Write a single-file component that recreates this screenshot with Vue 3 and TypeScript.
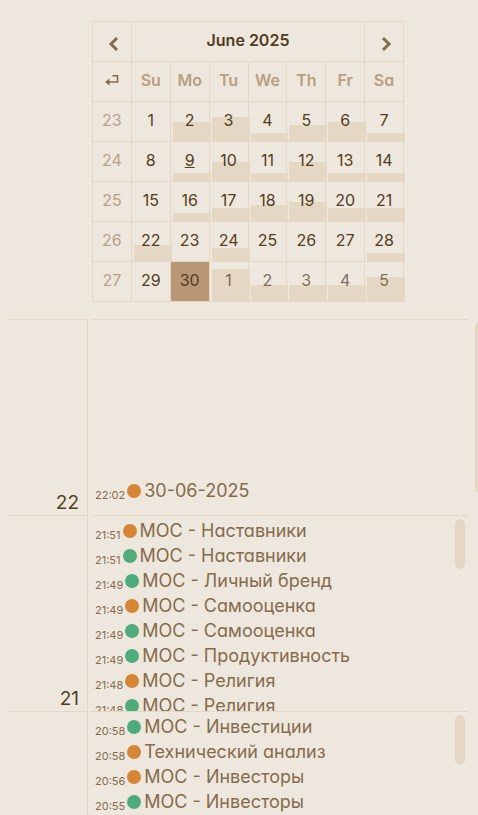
<script setup lang="ts">
import { ref } from 'vue'

interface Day {
  n: number
  fill: number
  next?: boolean
}
interface Week {
  no: number
  days: Day[]
}
interface Entry {
  time: string
  title: string
  color: 'orange' | 'green'
}
interface Hour {
  hour: number
  entries: Entry[]
  end?: boolean
}

const weekdays = ['Su', 'Mo', 'Tu', 'We', 'Th', 'Fr', 'Sa']
const today = 9
const selected = ref('27-30')

function makeWeek(no: number, first: number, fills: number[]): Week {
  return {
    no,
    days: fills.map((fill, i) => {
      const n = first + i
      return n > 30 ? { n: n - 30, fill, next: true } : { n, fill }
    }),
  }
}

const weeks: Week[] = [
  makeWeek(23, 1, [0, 20, 25, 9, 17, 20, 9]),
  makeWeek(24, 8, [0, 9, 20, 9, 20, 9, 9]),
  makeWeek(25, 15, [0, 9, 14, 17, 20, 14, 14]),
  makeWeek(26, 22, [17, 0, 14, 0, 0, 0, 9]),
  makeWeek(27, 29, [0, 0, 33, 17, 17, 17, 25]),
]

const hours: Hour[] = [
  { hour: 22, end: true, entries: [{ time: '22:02', title: '30-06-2025', color: 'orange' }] },
  {
    hour: 21,
    entries: [
      { time: '21:51', title: 'МОС - Наставники', color: 'orange' },
      { time: '21:51', title: 'МОС - Наставники', color: 'green' },
      { time: '21:49', title: 'МОС - Личный бренд', color: 'green' },
      { time: '21:49', title: 'МОС - Самооценка', color: 'orange' },
      { time: '21:49', title: 'МОС - Самооценка', color: 'green' },
      { time: '21:49', title: 'МОС - Продуктивность', color: 'green' },
      { time: '21:48', title: 'МОС - Религия', color: 'orange' },
      { time: '21:48', title: 'МОС - Религия', color: 'green' },
    ],
  },
  {
    hour: 20,
    entries: [
      { time: '20:58', title: 'МОС - Инвестиции', color: 'green' },
      { time: '20:58', title: 'Технический анализ', color: 'orange' },
      { time: '20:56', title: 'МОС - Инвесторы', color: 'orange' },
      { time: '20:55', title: 'МОС - Инвесторы', color: 'green' },
    ],
  },
]
</script>

<template>
  <main class="page">
    <div class="calendar-wrap">
      <table class="calendar">
        <thead>
          <tr>
            <th>
              <button class="nav" type="button" aria-label="Previous month">
                <svg width="12" height="16" viewBox="0 0 12 16"><path d="M9 2l-6 6 6 6" /></svg>
              </button>
            </th>
            <th colspan="6" class="month">June 2025</th>
            <th>
              <button class="nav" type="button" aria-label="Next month">
                <svg width="12" height="16" viewBox="0 0 12 16"><path d="M3 2l6 6-6 6" /></svg>
              </button>
            </th>
          </tr>
          <tr>
            <th>
              <button class="back" type="button" aria-label="Go to today">
                <svg width="14" height="12" viewBox="0 0 14 12">
                  <path class="line" d="M7.500 1.800H12.500V8H4" />
                  <path class="head" d="M0 8 4.500 4.500v7z" />
                </svg>
              </button>
            </th>
            <th v-for="d in weekdays" :key="d" class="weekday">{{ d }}</th>
          </tr>
        </thead>
        <tbody>
          <tr v-for="w in weeks" :key="w.no">
            <td class="week-no">{{ w.no }}</td>
            <td v-for="d in w.days" :key="d.n">
              <button
                type="button"
                class="day"
                :class="{
                  next: d.next,
                  selected: selected === `${w.no}-${d.n}`,
                  today: d.n === today && !d.next,
                }"
                @click="selected = `${w.no}-${d.n}`"
              >
                <span v-if="d.fill" class="fill" :style="{ height: `${d.fill}px` }"></span>
                <span class="num">{{ d.n }}</span>
              </button>
            </td>
          </tr>
        </tbody>
      </table>
    </div>

    <section class="agenda">
      <div v-for="h in hours" :key="h.hour" class="row">
        <div class="hour">{{ h.hour }}</div>
        <div class="slot">
          <ul class="entries" :class="{ end: h.end }">
            <li v-for="(e, i) in h.entries" :key="i">
              <a href="#" class="entry">
                <span class="time">{{ e.time }}</span>
                <span class="dot" :class="e.color"></span>
                <span>{{ e.title }}</span>
              </a>
            </li>
          </ul>
          <span v-if="!h.end" class="thumb"></span>
        </div>
      </div>
    </section>
    <span class="page-thumb"></span>
  </main>
</template>

<style>
body {
  background: #eee7de;
}
</style>

<style scoped>
.page {
  position: relative;
  box-sizing: border-box;
  display: flex;
  flex-direction: column;
  gap: 17px;
  height: 100vh;
  padding: 21px 10px 0 8px;
  overflow: hidden;
  color: #533d20;
  background: #eee7de;
  font-family: Inter, 'Noto Sans', sans-serif;
  font-feature-settings: 'cv11';
  font-size: 16px;
}
.calendar-wrap {
  display: flex;
  justify-content: center;
  padding-left: 20px;
}
.calendar {
  width: 312px;
  table-layout: fixed;
  border-collapse: collapse;
  text-align: center;
}
.calendar th,
.calendar td {
  box-sizing: border-box;
  height: 40px;
  padding: 0;
  border: 1px solid #e4d8c5;
  line-height: 20px;
}
.calendar .month,
.calendar .weekday,
.calendar .week-no {
  padding-bottom: 4px;
}
.calendar .month {
  font-weight: 600;
}
.calendar .weekday {
  color: #b89f80;
  font-weight: 600;
}
.calendar .week-no {
  color: #b8a184;
}
button {
  display: flex;
  align-items: center;
  justify-content: center;
  width: 100%;
  height: 39px;
  padding: 0;
  border: 0;
  background: none;
  color: inherit;
  font: inherit;
  font-feature-settings: inherit;
  cursor: pointer;
}
.nav {
  padding: 5px 0 0 4px;
}
.nav path {
  fill: none;
  stroke: #856c4b;
  stroke-width: 3;
}
.back {
  padding-bottom: 4px;
}
.back .line {
  fill: none;
  stroke: #856c4b;
  stroke-width: 1.6;
}
.back .head {
  fill: #856c4b;
}
.day {
  position: relative;
  padding-bottom: 4px;
}
.fill {
  position: absolute;
  right: -2px;
  bottom: -1px;
  left: 2px;
  background: #e4d8c5;
}
.num {
  position: relative;
}
.next .num {
  opacity: 0.7;
}
.today .num {
  text-decoration: underline;
}
.selected {
  background: #b89676;
}
.agenda {
  flex: 1;
  min-height: 0;
  overflow-y: auto;
  scrollbar-width: none;
}
.row {
  display: grid;
  grid-template-columns: 80px 1fr;
  gap: 3px;
  height: 196px;
}
.hour {
  display: flex;
  align-items: flex-end;
  justify-content: flex-end;
  padding-right: 8px;
  border-top: 1px solid #e4d8c5;
  border-right: 1px solid #e4d8c5;
  font-size: 19px;
  line-height: 24px;
}
.slot {
  position: relative;
  min-height: 0;
  border-top: 1px solid #e4d8c5;
}
.entries {
  box-sizing: border-box;
  display: flex;
  flex-direction: column;
  height: 195px;
  margin: 0;
  padding: 2px 16px 0 4px;
  overflow: hidden;
  list-style: none;
}
.entries.end {
  justify-content: flex-end;
  padding-bottom: 12px;
}
.entries li {
  flex: none;
}
.entry {
  display: flex;
  align-items: center;
  gap: 2px;
  height: 25px;
  color: #856c4b;
  font-size: 18px;
  line-height: 25px;
  text-decoration: none;
  white-space: nowrap;
}
.time {
  padding-top: 8px;
  font-size: 11px;
  line-height: 16px;
}
.dot {
  width: 14px;
  height: 14px;
  margin-right: 1px;
  border-radius: 50%;
}
.orange {
  background: #d68534;
}
.green {
  background: #50ab7a;
}
.thumb {
  position: absolute;
  top: 3px;
  right: 3px;
  width: 10px;
  height: 50px;
  border-radius: 5px;
  background: #e4d8c5;
}
.page-thumb {
  position: absolute;
  top: 322px;
  right: -7px;
  width: 10px;
  height: 171px;
  border-radius: 5px;
  background: #e4d8c5;
}
</style>
